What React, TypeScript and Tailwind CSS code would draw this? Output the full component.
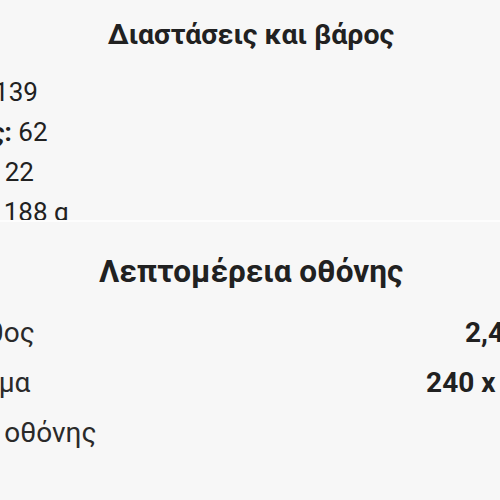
import React from "react";

const dims = [
  { label: "Ύψος:", value: "139", indent: "" },
  { label: "Πλάτος:", value: "62", indent: "" },
  { label: "Πάχος:", value: "22", indent: "" },
  { label: "Βάρος:", value: "188 g", indent: "" },
];

const display = [
  { label: "Μέγεθος", value: "2,4 ίντσες" },
  { label: "Ψήφισμα", value: "240 x 320 pix" },
  { label: "Τύπος οθόνης", value: "" },
];

export default function App() {
  return (
    <div className="w-[500px] h-[500px] overflow-hidden bg-[#f7f7f7] text-[#212121] font-['Roboto',sans-serif]">
      <div className="w-[640px] -ml-[69px]">
        <section className="h-[220px] overflow-hidden px-[11px] pt-[17px]">
          <h2 className="text-center text-[28.5px] leading-[36px] font-bold">
            Διαστάσεις και βάρος
          </h2>
          <ul className="mt-[19px] -ml-[26px]">
            {dims.map((d) => (
              <li key={d.label} className={`text-[26px] leading-[40px] ${d.indent}`}>
                <span className="font-bold">{d.label}</span> {d.value}
              </li>
            ))}
          </ul>
        </section>
        <div className="h-[2px] bg-[#fdfdfd]" />
        <section className="px-[11px] pt-[32px]">
          <h2 className="text-center text-[31.5px] leading-[36px] font-bold">
            Λεπτομέρεια οθόνης
          </h2>
          <div className="mt-[18px] -ml-[23px] w-[676px]">
            {display.map((r) => (
              <div
                key={r.label}
                className="flex justify-between text-[28px] leading-[50px]"
              >
                <span className="text-[#2a2a2a]">{r.label}</span>
                <span className="font-bold">{r.value}</span>
              </div>
            ))}
          </div>
        </section>
      </div>
    </div>
  );
}
